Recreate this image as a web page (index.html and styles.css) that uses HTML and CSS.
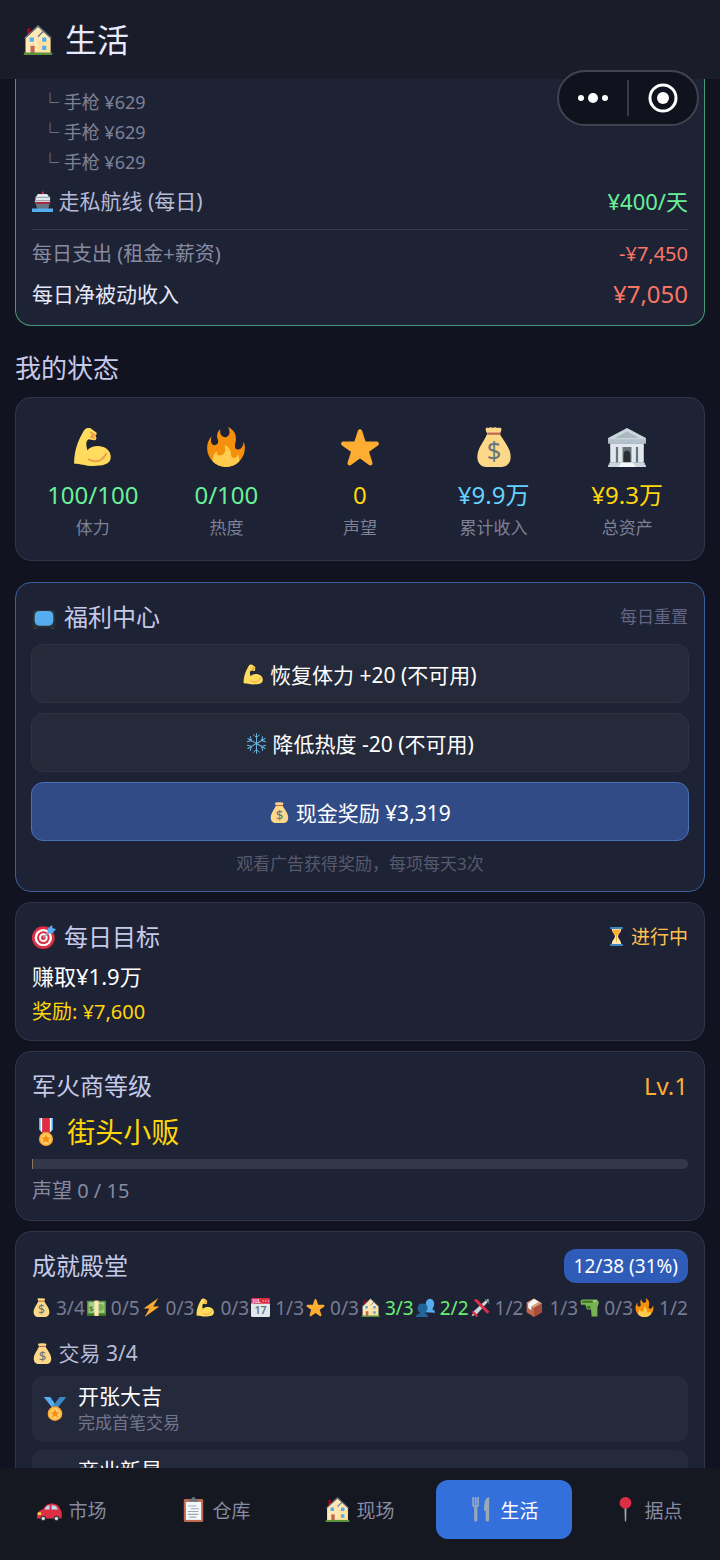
FILE: index.html
```html
<!DOCTYPE html>
<html lang="zh-CN">
<head>
    <meta charset="UTF-8">
    <meta name="viewport" content="width=device-width, initial-scale=1.0">
    <title>生活</title>
    <link rel="stylesheet" href="styles.css">
</head>
<body>
    <!-- Icon sprites -->
    <svg class="sprites" aria-hidden="true">
        <symbol id="house" viewBox="0 0 36 36">
            <path d="M5 4h4v8H5z" fill="#a0041e"/>
            <path d="M3 16L18 2l15 14v18H3z" fill="#ffe8b6"/>
            <path d="M18 18h15v16H18z" fill="#ffd98c" opacity=".5"/>
            <path d="M2 16L18 1l16 15M18 14l7-7" fill="none" stroke="#66757f" stroke-width="1.6"/>
            <path d="M8 15h5v5H8zM23 15h5v5h-5zM23 25h5v5h-5z" fill="#55acee"/>
            <path d="M9 25h5v9H9z" fill="#c1694f"/>
            <path d="M1 33h34v3H1z" fill="#5c913b"/>
        </symbol>
        <symbol id="ship" viewBox="0 0 36 36">
            <path d="M17 1h3v5h-3z" fill="#dd2e44"/>
            <path d="M10 5h16l3 5H7zM6 10h25v6H6z" fill="#e1e8ed"/>
            <path d="M7 10h23v2H7z" fill="#99aab5"/>
            <path d="M5 16h26v5H5z" fill="#ccd6dd"/>
            <path d="M5 19h26v3H6z" fill="#be1931"/>
            <path d="M6 22h24l-2 9H9z" fill="#66757f"/>
            <path d="M0 30h36v6H0z" fill="#55acee"/>
        </symbol>
        <symbol id="arm" viewBox="0 0 36 36">
            <path d="M1 33C1 19 6 10 10 3c2-3 6-2 7-1l4 3c1 1 0 2-1 3 2 1 1 4-1 4l-5-1c-3 2-2 6-1 10 6-7 21-4 21 6 0 7-8 8-16 8-7 0-11-2-17-2z" fill="#ffdc5d"/>
            <path d="M14 29c7 4 12 2 16-5M16 5l3 2-3 2M17 9l2 1" fill="none" stroke="#ef9645" stroke-width="1.6" stroke-linecap="round"/>
        </symbol>
        <symbol id="fire" viewBox="0 0 36 36">
            <path fill="#f4900c" d="M35 19c0-2.062-.367-4.039-1.04-5.868-.46 5.389-3.333 8.157-6.335 6.868-2.812-1.208-.917-5.917-.777-8.164.236-3.809-.012-8.169-6.931-11.794 2.875 5.5.333 8.917-2.333 9.125-2.958.231-5.667-2.542-4.667-7.042-3.238 2.386-3.332 6.402-2.333 9 1.042 2.708-.042 4.958-2.583 5.208-2.84.28-4.418-3.041-2.963-8.333C2.52 10.965 1 14.805 1 19c0 9.389 7.611 17 17 17s17-7.611 17-17z"/>
            <path fill="#ffcc4d" d="M28.394 23.999c.148 3.084-2.561 4.293-4.019 3.709-2.106-.843-1.541-2.291-2.083-5.291s-2.625-5.083-5.708-6c2.25 6.333-1.247 8.667-3.08 9.084-1.872.426-3.753-.001-3.968-4.007C7.352 23.668 6 26.676 6 30c0 .368.023.73.055 1.09C9.125 34.124 13.342 36 18 36s8.875-1.876 11.945-4.91c.032-.36.055-.722.055-1.09 0-2.187-.584-4.236-1.606-6.001z"/>
        </symbol>
        <symbol id="star" viewBox="0 0 36 36">
            <path fill="#ffac33" d="M27.287 34.627c-.404 0-.806-.124-1.152-.371L18 28.422l-8.135 5.834c-.343.249-.744.372-1.147.372-.408 0-.818-.127-1.166-.379-.689-.499-.978-1.385-.721-2.194l3.034-9.792-8.062-5.681c-.685-.505-.97-1.393-.708-2.203.264-.809 1.016-1.357 1.866-1.363L12.947 13l3.179-9.549c.268-.809 1.023-1.353 1.874-1.353.851 0 1.606.545 1.875 1.353L23 13l10.036.015c.853.006 1.606.554 1.867 1.363.263.81-.022 1.698-.708 2.203l-8.062 5.681 3.034 9.792c.26.809-.033 1.695-.723 2.194-.347.254-.753.379-1.157.379z"/>
        </symbol>
        <symbol id="bag" viewBox="0 0 36 36">
            <path d="M12 6c-3-5-1-6 1-5 1-1 3-1 4 0 1-1 3-1 4 0 4-1 5 1 2 5 4 7 10 13 10 21 0 6-4 9-8 9H11c-5 0-8-4-8-9C3 19 9 13 12 6z" fill="#fdd888"/>
            <path d="M12 5h12v2H12z" fill="#bf6952"/>
            <text x="18" y="30" text-anchor="middle" font-family="Noto Sans, sans-serif" font-size="23" fill="#67757f">$</text>
        </symbol>
        <symbol id="bank" viewBox="0 0 36 36">
            <path d="M3 11h30v22H3z" fill="#66757f"/>
            <path d="M18 1l17 9v3H1v-3z" fill="#ccd6dd"/>
            <path d="M18 4l11 6H7z" fill="#aab8c2"/>
            <path d="M1 11h34v4H1z" fill="#b5c1ca"/>
            <path d="M3 17h5v15H3zM10 17h4v15h-4zM22 17h4v15h-4zM28 17h5v15h-5z" fill="#e1e8ed"/>
            <path d="M3 15h30v3H3z" fill="#e1e8ed"/>
            <path d="M15 33v-8c0-5 6-5 6 0v8z" fill="#292f33"/>
            <path d="M2 32h32v2H2zM1 34h34v2H1z" fill="#ccd6dd"/>
            <path d="M13 32h10l3 4H10z" fill="#f5f8fa"/>
        </symbol>
        <symbol id="tv" viewBox="0 0 36 36">
            <rect x="1" y="7" width="34" height="27" rx="3" fill="#292f33"/>
            <rect x="4" y="9" width="28" height="22" rx="7" fill="#55acee"/>
            <path d="M3 34h4v2H3zM29 34h4v2h-4z" fill="#3b4650"/>
        </symbol>
        <symbol id="snow" viewBox="0 0 36 36">
            <g fill="none" stroke="#6cb4e4" stroke-width="1.7" stroke-linecap="round">
                <path id="flake" d="M18 18V1M13 3l5 5 5-5"/>
                <use href="#flake" transform="rotate(60 18 18)"/>
                <use href="#flake" transform="rotate(120 18 18)"/>
                <use href="#flake" transform="rotate(180 18 18)"/>
                <use href="#flake" transform="rotate(240 18 18)"/>
                <use href="#flake" transform="rotate(300 18 18)"/>
            </g>
        </symbol>
        <symbol id="target" viewBox="0 0 36 36">
            <circle cx="17" cy="19" r="17" fill="#dd2e44"/>
            <circle cx="17" cy="19" r="13" fill="#fff"/>
            <circle cx="17" cy="19" r="9.500" fill="#dd2e44"/>
            <circle cx="17" cy="19" r="6.500" fill="#fff"/>
            <circle cx="17" cy="19" r="3.500" fill="#dd2e44"/>
            <path d="M17 19L28 8" stroke="#99aab5" stroke-width="2"/>
            <path d="M23 11l1-6 6-5 1 5 5 1-5 6-6 1z" fill="#55acee"/>
        </symbol>
        <symbol id="glass" viewBox="0 0 36 36">
            <path d="M9 3h18c0 8-6 10-6 15s6 7 6 15H9c0-8 6-10 6-15S9 11 9 3z" fill="#ffe8b6"/>
            <path d="M10 5h16c-1 7-6 9-7 13v10h-2V18c-1-4-6-6-7-13z" fill="#ffac33"/>
            <path d="M6 0h24v4H6zM6 32h24v4H6z" fill="#3b88c3"/>
        </symbol>
        <symbol id="ribbon" viewBox="0 0 36 36">
            <path d="M9 0h18v15l-9 6-9-6z" fill="#55acee"/>
            <path d="M11 0h14v17l-7 4-7-4z" fill="#fff"/>
            <path d="M13 0h10v19H13z" fill="#dd2e44"/>
            <circle cx="18" cy="27" r="9" fill="#ffac33"/>
            <circle cx="18" cy="27" r="7" fill="#ffcc6d"/>
            <path d="M18 21l2 4h4l-3 3 1 4-4-2-4 2 1-4-3-3h4z" fill="#f4900c"/>
        </symbol>
        <symbol id="medal" viewBox="0 0 36 36">
            <path d="M1 0h10l10 15h-8z" fill="#55acee"/>
            <path d="M35 0H25L13 16h9z" fill="#3b88c3"/>
            <circle cx="18" cy="25" r="11" fill="#ffac33"/>
            <circle cx="18" cy="25" r="8.500" fill="#ffcc6d"/>
            <path d="M18 18l2 5h5l-4 3 2 5-5-3-5 3 2-5-4-3h5z" fill="#f4900c"/>
        </symbol>
        <symbol id="cash" viewBox="0 0 36 36">
            <rect y="6" width="36" height="28" rx="1" fill="#3e721d"/>
            <rect y="5" width="36" height="26" rx="1" fill="#5c913b"/>
            <rect x="3" y="8" width="30" height="20" fill="#a7d28b"/>
            <circle cx="25" cy="18" r="7" fill="#77b255"/>
            <path d="M14 5h8v29h-8z" fill="#ffe8b6"/>
            <text x="8" y="24" text-anchor="middle" font-family="Noto Sans, sans-serif" font-size="15" font-weight="600" fill="#3e721d">$</text>
        </symbol>
        <symbol id="bolt" viewBox="0 0 36 36">
            <path d="M31 0L3 20h11L5 36l28-20H21z" fill="#ffac33"/>
            <path d="M31 0L14 20h5L5 36l18-18h-7z" fill="#f4900c" opacity=".4"/>
        </symbol>
        <symbol id="calendar" viewBox="0 0 36 36">
            <rect y="2" width="36" height="34" rx="3" fill="#e1e8ed"/>
            <path d="M0 11V3c0-2 1-3 3-3h30c2 0 3 1 3 3v8z" fill="#dd2e44"/>
            <text x="3" y="9" font-family="Noto Sans, sans-serif" font-size="9" font-weight="700" fill="#f5f8fa">JUL</text>
            <path d="M22 4h2v3h-2zM27 4h2v3h-2zM32 4h2v3h-2z" fill="#f4abba"/>
            <text x="18" y="31" text-anchor="middle" font-family="Noto Sans, sans-serif" font-size="20" font-weight="600" fill="#66757f">17</text>
        </symbol>
        <symbol id="people" viewBox="0 0 36 36">
            <path d="M16 27c0-4 5-4 6-6-4-4-4-9-3-13 2-9 13-9 15 0 1 5 0 9-3 13 1 2 5 2 5 6v1z" fill="#55acee"/>
            <path d="M0 36c0-6 6-5 8-8-5-3-6-9-4-13 3-6 14-6 17 0 2 5 0 10-4 13 1 3 6 2 6 8z" fill="#226699"/>
        </symbol>
        <symbol id="plane" viewBox="0 0 36 36">
            <path d="M1 35L6 24 26 6l6-4c2 0 2 2 1 4l-5 6L12 30z" fill="#ccd6dd"/>
            <path d="M5 4l6-2 24 24-4 4zM1 26l4-2 9 10-4 2z" fill="#dd2e44"/>
            <path d="M27 2l8 8" stroke="#66757f" stroke-width="2"/>
        </symbol>
        <symbol id="box" viewBox="0 0 36 36">
            <path d="M17 1l15 9v17L17 36 3 27V9z" fill="#c1694f"/>
            <path d="M17 1l15 9-15 9L3 9z" fill="#d99e82"/>
            <path d="M17 19l15-9v17l-15 9z" fill="#a84e38"/>
            <path d="M17 2l9 5L12 16v7l-6-4v-8z" fill="#f5f8fa"/>
        </symbol>
        <symbol id="gun" viewBox="0 0 36 36">
            <path d="M1 5l3-2h28l4 5-3 10v17H22l-1-13h-8l-3-9H2z" fill="#77b255"/>
            <path d="M4 5h20v4H4zM13 15h7v5h-7z" fill="#3e721d"/>
            <path d="M25 6h6" stroke="#a6d388" stroke-width="3"/>
        </symbol>
        <symbol id="car" viewBox="0 0 36 36">
            <path d="M0 31c0-8 2-11 8-13l5-6c6-4 14-3 18 1l4 7c1 4 1 8 0 11z" fill="#dd2e44"/>
            <path d="M11 18c2-4 4-6 7-6v6zM21 12c5 0 7 1 9 6h-9z" fill="#bbddf5"/>
            <path d="M1 22h5v4H1z" fill="#ffcc4d"/>
            <circle cx="9" cy="31" r="4" fill="#292f33"/>
            <circle cx="28" cy="31" r="4" fill="#292f33"/>
            <circle cx="9" cy="31" r="2.500" fill="#ccd6dd"/>
            <circle cx="28" cy="31" r="2.500" fill="#ccd6dd"/>
        </symbol>
        <symbol id="clipboard" viewBox="0 0 36 36">
            <rect x="4" y="3" width="28" height="33" rx="2" fill="#c1694f"/>
            <path d="M7 7h22v26H7z" fill="#f5f8fa"/>
            <path d="M11 7c0-3 3-4 4-4 0-4 6-4 6 0 1 0 4 1 4 4z" fill="#66757f"/>
            <path d="M10 13h12M14 17h12M10 21h15M10 25h15M12 29h10" stroke="#99aab5" stroke-width="1.5"/>
        </symbol>
        <symbol id="fork" viewBox="0 0 36 36">
            <path d="M6 1v11c0 3 7 3 7 0V1M9.500 1v13" fill="none" stroke="#99aab5" stroke-width="2.500" stroke-linecap="round"/>
            <path d="M7.500 15h4.500v18c0 3-4.500 3-4.500 0z" fill="#99aab5"/>
            <path d="M29 0v33c0 3-5 3-5 0V20h-2C21 10 23 1 29 0z" fill="#99aab5"/>
        </symbol>
        <symbol id="pin" viewBox="0 0 36 36">
            <path d="M16.500 14h3L19 34l-1 2-1-2z" fill="#99aab5"/>
            <circle cx="18" cy="8.500" r="8.500" fill="#dd2e44"/>
        </symbol>
    </svg>

    <header class="header">
        <h1><svg class="icon"><use href="#house"/></svg>生活</h1>
    </header>

    <div class="capsule">
        <button type="button" aria-label="更多">
            <svg width="32" height="12" viewBox="0 0 32 12"><g fill="#fff"><circle cx="4" cy="6" r="3"/><circle cx="16" cy="6" r="5"/><circle cx="28" cy="6" r="3"/></g></svg>
        </button>
        <button type="button" aria-label="关闭">
            <svg width="30" height="30" viewBox="0 0 30 30"><circle cx="15" cy="15" r="13" fill="none" stroke="#fff" stroke-width="3"/><circle cx="15" cy="15" r="6" fill="#fff"/></svg>
        </button>
    </div>

    <main class="content">
        <section class="card income">
            <div class="detail">└ 手枪 ¥629</div>
            <div class="detail">└ 手枪 ¥629</div>
            <div class="detail">└ 手枪 ¥629</div>
            <div class="row route">
                <span><svg class="icon"><use href="#ship"/></svg> 走私航线 (每日)</span>
                <span class="green price">¥400/天</span>
            </div>
            <div class="row expense">
                <span>每日支出 (租金+薪资)</span>
                <span class="red">-¥7,450</span>
            </div>
            <div class="row net">
                <span>每日净被动收入</span>
                <span class="red total">¥7,050</span>
            </div>
        </section>

        <h2 class="section-title">我的状态</h2>
        <section class="card stats">
            <div class="stat"><svg class="icon"><use href="#arm"/></svg><b class="green">100/100</b><span>体力</span></div>
            <div class="stat"><svg class="icon"><use href="#fire"/></svg><b class="green">0/100</b><span>热度</span></div>
            <div class="stat"><svg class="icon"><use href="#star"/></svg><b class="gold">0</b><span>声望</span></div>
            <div class="stat"><svg class="icon"><use href="#bag"/></svg><b class="cyan">¥9.9万</b><span>累计收入</span></div>
            <div class="stat"><svg class="icon"><use href="#bank"/></svg><b class="gold">¥9.3万</b><span>总资产</span></div>
        </section>

        <section class="card welfare">
            <div class="card-header">
                <h3><svg class="icon"><use href="#tv"/></svg>福利中心</h3>
                <span class="reset">每日重置</span>
            </div>
            <div class="rewards">
                <button type="button" class="reward off"><svg class="icon"><use href="#arm"/></svg> 恢复体力 +20 (不可用)</button>
                <button type="button" class="reward off"><svg class="icon"><use href="#snow"/></svg> 降低热度 -20 (不可用)</button>
                <button type="button" class="reward"><svg class="icon"><use href="#bag"/></svg> 现金奖励 ¥3,319</button>
            </div>
            <p class="note">观看广告获得奖励，每项每天3次</p>
        </section>

        <section class="card goal">
            <div class="card-header">
                <h3><svg class="icon"><use href="#target"/></svg>每日目标</h3>
                <span class="status"><svg class="icon"><use href="#glass"/></svg> 进行中</span>
            </div>
            <p class="goal-name">赚取¥1.9万</p>
            <p class="goal-prize">奖励: ¥7,600</p>
        </section>

        <section class="card level">
            <div class="card-header">
                <h3>军火商等级</h3>
                <span class="lv">Lv.1</span>
            </div>
            <p class="rank"><svg class="icon"><use href="#ribbon"/></svg> 街头小贩</p>
            <div class="bar"><div class="bar-fill" style="width: 0%"></div></div>
            <p class="rep">声望 0 / 15</p>
        </section>

        <section class="card achievements">
            <div class="card-header">
                <h3>成就殿堂</h3>
                <span class="badge">12/38 (31%)</span>
            </div>
            <div class="tags">
                <span><svg class="icon"><use href="#bag"/></svg> 3/4</span>
                <span><svg class="icon"><use href="#cash"/></svg> 0/5</span>
                <span><svg class="icon"><use href="#bolt"/></svg> 0/3</span>
                <span><svg class="icon"><use href="#arm"/></svg> 0/3</span>
                <span><svg class="icon"><use href="#calendar"/></svg> 1/3</span>
                <span><svg class="icon"><use href="#star"/></svg> 0/3</span>
                <span class="done"><svg class="icon"><use href="#house"/></svg> 3/3</span>
                <span class="done"><svg class="icon"><use href="#people"/></svg> 2/2</span>
                <span><svg class="icon"><use href="#plane"/></svg> 1/2</span>
                <span><svg class="icon"><use href="#box"/></svg> 1/3</span>
                <span><svg class="icon"><use href="#gun"/></svg> 0/3</span>
                <span><svg class="icon"><use href="#fire"/></svg> 1/2</span>
            </div>
            <h4><svg class="icon"><use href="#bag"/></svg> 交易 3/4</h4>
            <ul class="medals">
                <li>
                    <svg class="icon"><use href="#medal"/></svg>
                    <div>
                        <p class="medal-name">开张大吉</p>
                        <p class="medal-desc">完成首笔交易</p>
                    </div>
                </li>
                <li>
                    <svg class="icon"><use href="#medal"/></svg>
                    <div>
                        <p class="medal-name">商业新星</p>
                    </div>
                </li>
            </ul>
        </section>
    </main>

    <nav class="tabs">
        <button type="button"><svg class="icon"><use href="#car"/></svg>市场</button>
        <button type="button"><svg class="icon"><use href="#clipboard"/></svg>仓库</button>
        <button type="button"><svg class="icon"><use href="#house"/></svg>现场</button>
        <button type="button" class="active"><svg class="icon"><use href="#fork"/></svg>生活</button>
        <button type="button"><svg class="icon"><use href="#pin"/></svg>据点</button>
    </nav>
</body>
</html>
```
FILE: styles.css
```css
* {
    box-sizing: border-box;
}

body {
    display: flex;
    flex-direction: column;
    height: 100vh;
    margin: 0;
    background-color: #121320;
    color: #fff;
    font-family: "Noto Sans", "Noto Sans CJK SC", sans-serif;
    font-size: 19px;
    line-height: 28px;
    overflow: hidden;
}

h1, h2, h3, h4, p, ul {
    margin: 0;
    padding: 0;
    font-weight: normal;
}

button {
    border: none;
    background: none;
    color: inherit;
    font-family: inherit;
    cursor: pointer;
}

.sprites {
    display: none;
}

.icon {
    width: 1em;
    height: 1em;
    vertical-align: -0.12em;
}

.green { color: #69f098; }
.red { color: #f87666; }
.gold { color: #ffd60a; }
.cyan { color: #64d2ff; }

/* Header */
.header {
    flex: none;
    padding: 20px 23px 19px;
    background-color: #1a1d29;
}

.header h1 {
    display: flex;
    align-items: center;
    gap: 12px;
    font-size: 32px;
    line-height: 40px;
    color: #e8eaff;
}

.header .icon {
    width: 30px;
    height: 30px;
}

/* Floats over the page */
.capsule {
    position: absolute;
    top: 70px;
    right: 21px;
    z-index: 2;
    display: flex;
    width: 142px;
    height: 56px;
    padding: 8px 0;
    border: 2px solid #41434f;
    border-radius: 28px;
    background-color: #10121d;
}

.capsule button {
    display: flex;
    flex: 1;
    align-items: center;
    justify-content: center;
    padding: 0;
}

.capsule button + button {
    border-left: 2px solid #393b46;
}

/* Cards */
.content {
    flex: 1;
    min-height: 0;
    padding: 0 15px;
    overflow-y: auto;
    scrollbar-width: none;
}

.card {
    margin-bottom: 10px;
    padding: 17px 16px 15px;
    border: 1px solid #32354a;
    border-radius: 16px;
    background-color: #1e2235;
}

.card-header {
    display: flex;
    align-items: center;
    justify-content: space-between;
    height: 34px;
}

.card-header h3 {
    display: flex;
    align-items: center;
    gap: 8px;
    font-size: 24px;
    color: #c5cae9;
}

.row {
    display: flex;
    align-items: center;
    justify-content: space-between;
    line-height: 30px;
}

/* Income */
.income {
    margin-bottom: 24px;
    padding-top: 8px;
    padding-bottom: 16px;
    border-color: #459a75;
    border-top: none;
    border-radius: 0 0 16px 16px;
}

.detail {
    padding-left: 9px;
    font-size: 18px;
    line-height: 30px;
    color: #7d8196;
}

.route {
    margin-top: 9px;
    padding-bottom: 13px;
    border-bottom: 1px solid #363a4c;
    font-size: 21px;
    color: #b6bad4;
}

.price {
    font-size: 22px;
}

.expense {
    margin-top: 9px;
    font-size: 20px;
    color: #878ba1;
}

.net {
    margin-top: 10px;
    font-size: 21px;
    color: #e4e7fa;
}

.total {
    font-size: 24px;
}

.section-title {
    margin-bottom: 11px;
    font-size: 26px;
    line-height: 36px;
    color: #c5cae9;
}

/* Stats */
.stats {
    display: flex;
    margin-bottom: 21px;
    padding: 29px 10px 20px;
}

.stat {
    display: flex;
    flex: 1;
    flex-direction: column;
    align-items: center;
}

.stat .icon {
    width: 40px;
    height: 40px;
}

.stat b {
    margin-top: 12px;
    font-size: 24px;
    font-weight: normal;
    line-height: 32px;
}

.stat span {
    margin-top: 5px;
    font-size: 17px;
    line-height: 24px;
    color: #7d8196;
}

/* Welfare */
.welfare {
    border-color: #3b5f9e;
}

.reset {
    font-size: 17px;
    color: #626684;
}

.rewards {
    display: grid;
    gap: 10px;
    margin: 10px -1px 0;
}

.reward {
    height: 59px;
    border: 1px solid #4a70b8;
    border-radius: 12px;
    background-color: #304b85;
    color: #fff;
    font-size: 21px;
}

.reward.off {
    border-color: #2e3340;
    background-color: #252a3a;
}

.note {
    margin-top: 11px;
    font-size: 17px;
    line-height: 24px;
    text-align: center;
    color: #555a6c;
}

/* Daily goal */
.goal {
    padding-bottom: 14px;
}

.status {
    color: #ffc04d;
}

.goal-name {
    margin-top: 7px;
    font-size: 22px;
    line-height: 30px;
}

.goal-prize {
    margin-top: 7px;
    font-size: 20px;
    color: #ffd60a;
}

/* Dealer level */
.lv {
    font-size: 24px;
    color: #ffac33;
}

.rank {
    margin-top: 9px;
    font-size: 28px;
    line-height: 40px;
    color: #ffd60a;
}

.bar {
    height: 10px;
    margin-top: 7px;
    border-radius: 0 5px 5px 0;
    background-color: #33374a;
    overflow: hidden;
}

.bar-fill {
    height: 100%;
    border-left: 1px solid #8d7755;
}

.rep {
    margin-top: 8px;
    font-size: 20px;
    color: #878ba1;
}

/* Achievements */
.badge {
    padding: 3px 10px;
    border-radius: 12px;
    background-color: #2f5cb8;
}

.tags {
    display: flex;
    justify-content: space-between;
    margin-top: 11px;
    white-space: nowrap;
    color: #787c92;
}

.tags .done {
    color: #69f070;
}

.achievements h4 {
    margin-top: 16px;
    font-size: 21px;
    line-height: 30px;
    color: #b6bad4;
}

.medals {
    display: grid;
    gap: 8px;
    margin-top: 8px;
    list-style: none;
}

.medals li {
    display: flex;
    align-items: center;
    gap: 11px;
    min-height: 66px;
    padding: 6px 11px;
    border-radius: 10px;
    background-color: #25293c;
}

.medals .icon {
    width: 24px;
    height: 24px;
}

.medals div {
    align-self: flex-start;
}

.medal-name {
    font-size: 21px;
}

.medal-desc {
    font-size: 17px;
    line-height: 26px;
    color: #72768c;
}

/* Bottom tabs */
.tabs {
    display: flex;
    flex: none;
    gap: 8px;
    height: 92px;
    padding: 12px 4px 21px;
    background-color: #151721;
}

.tabs button {
    display: flex;
    flex: 1;
    align-items: center;
    justify-content: center;
    gap: 6px;
    border-radius: 12px;
    font-size: 19px;
    color: #878ba1;
}

.tabs .icon {
    width: 25px;
    height: 25px;
}

.tabs .active {
    background-color: #3370dc;
    color: #fff;
}
```
